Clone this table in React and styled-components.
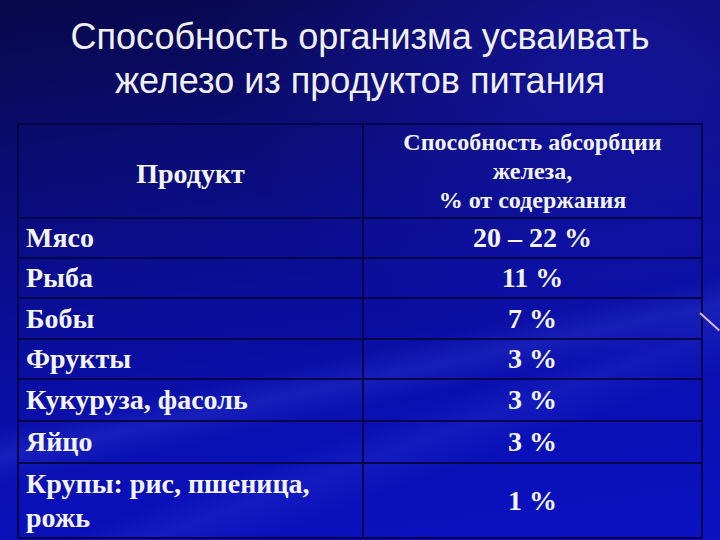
import styled, { createGlobalStyle } from "styled-components";

const rows = [
    { name: "Мясо", value: "20 – 22 %", h: 40 },
    { name: "Рыба", value: "11 %", h: 40 },
    { name: "Бобы", value: "7 %", h: 41 },
    { name: "Фрукты", value: "3 %", h: 40 },
    { name: "Кукуруза, фасоль", value: "3 %", h: 42 },
    { name: "Яйцо", value: "3 %", h: 42 },
    { name: "Крупы: рис, пшеница, рожь", value: "1 %", h: 75 },
];

const App = () => {
    return (
        <>
            <GlobalStyle />
            <Slide>
                <Streak />
                <Title>
                    Способность организма усваивать
                    <br />
                    железо из продуктов питания
                </Title>
                <Table>
                    <colgroup>
                        <col style={{ width: 345 }} />
                        <col style={{ width: 339 }} />
                    </colgroup>
                    <thead>
                        <tr>
                            <HeadCell>
                                <HeadProduct>Продукт</HeadProduct>
                            </HeadCell>
                            <HeadCell>
                                Способность абсорбции
                                <br />
                                железа,
                                <br />
                                % от содержания
                            </HeadCell>
                        </tr>
                    </thead>
                    <tbody>
                        {rows.map((r) => (
                            <Row key={r.name} $h={r.h}>
                                <NameCell $wrap={r.h > 60}>{r.name}</NameCell>
                                <ValueCell>{r.value}</ValueCell>
                            </Row>
                        ))}
                    </tbody>
                </Table>
            </Slide>
        </>
    );
};

export default App;

const GlobalStyle = createGlobalStyle`
    html, body {
        margin: 0;
        padding: 0;
        background: #0a0c80;
    }
`;

const Slide = styled.div`
    position: relative;
    width: 720px;
    height: 540px;
    overflow: hidden;
    box-sizing: border-box;
    padding: 15px 18px 0;
    display: flex;
    flex-direction: column;
    align-items: center;
    background:
        linear-gradient(168deg, transparent 62%, rgba(90, 110, 255, 0.16) 66%, transparent 70%),
        linear-gradient(160deg, transparent 70%, rgba(80, 100, 255, 0.13) 74%, transparent 79%),
        radial-gradient(ellipse at 85% 8%, rgba(30, 30, 200, 0.45), transparent 45%),
        linear-gradient(172deg, #08084a 0%, #0a0c6c 22%, #0a0e98 50%, #0a10b4 75%, #0b12c2 100%);
`;

const Streak = styled.div`
    position: absolute;
    right: -6px;
    top: 312px;
    width: 26px;
    height: 2px;
    background: #d8b8f0;
    transform: rotate(42deg);
    transform-origin: left center;
`;

const Title = styled.h1`
    margin: 0;
    font-family: "Liberation Sans", Arial, sans-serif;
    font-weight: normal;
    font-size: 36px;
    line-height: 44px;
    color: #f0f0f4;
    text-align: center;
`;

const Table = styled.table`
    margin-top: 20px;
    width: 684px;
    table-layout: fixed;
    border-collapse: collapse;
    font-family: "Liberation Serif", "Times New Roman", serif;
    font-weight: bold;
    color: #f4f4f6;

    td, th {
        border: 2px solid #05054a;
        box-sizing: border-box;
    }
`;

const HeadCell = styled.th`
    height: 94px;
    padding: 0;
    font-size: 24px;
    line-height: 29px;
    text-align: center;
    vertical-align: middle;
`;

const HeadProduct = styled.span`
    display: inline-block;
    font-size: 28px;
    padding-top: 6px;
`;

const Row = styled.tr`
    height: ${(p) => p.$h}px;
`;

const NameCell = styled.td`
    padding: 0 0 0 7px;
    font-size: 28px;
    line-height: ${(p) => (p.$wrap ? "34px" : "30px")};
    text-align: left;
    vertical-align: middle;
    padding-right: ${(p) => (p.$wrap ? "30px" : "0")};
`;

const ValueCell = styled.td`
    padding: 0;
    font-size: 28px;
    text-align: center;
    vertical-align: middle;
`;
